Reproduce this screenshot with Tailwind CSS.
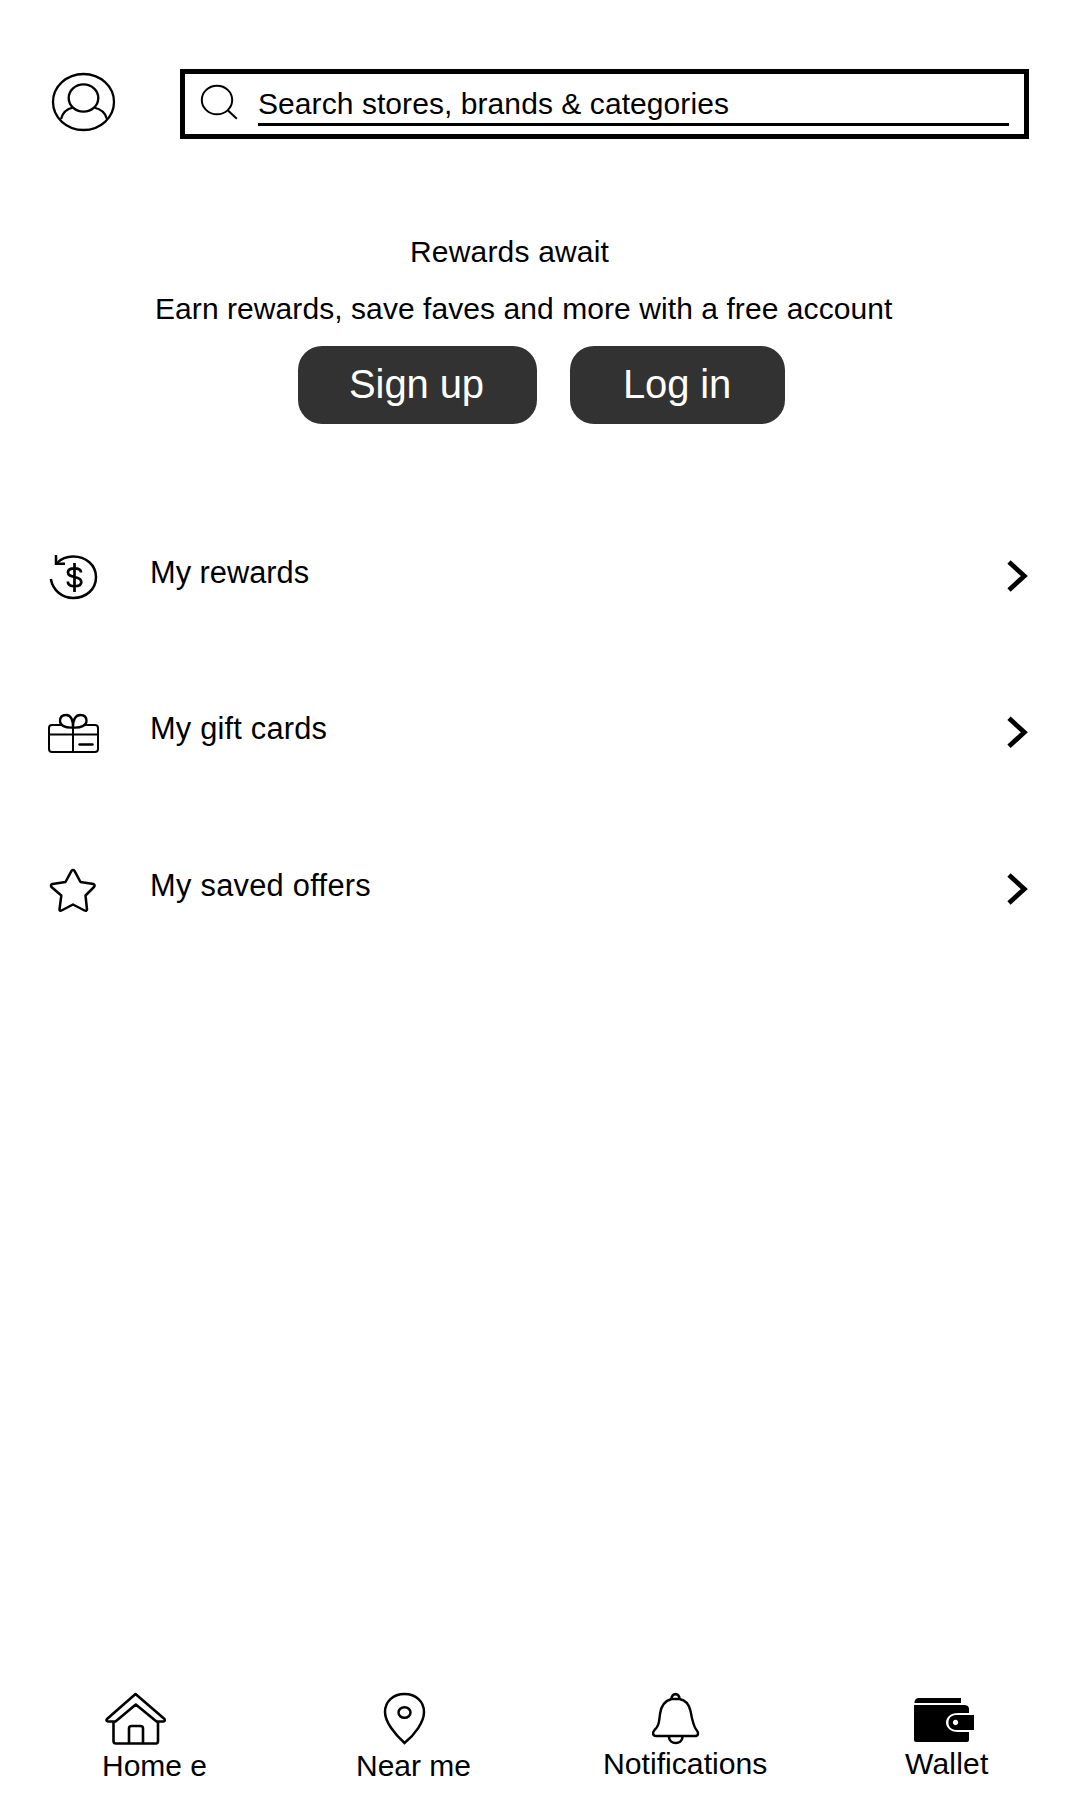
<!DOCTYPE html>
<html lang="en">
<head>
<meta charset="utf-8">
<title>Wallet</title>
<script src="https://cdn.jsdelivr.net/npm/@tailwindcss/browser@4"></script>
</head>
<body class="bg-white">
<div class="flex h-[1800px] w-[1080px] flex-col overflow-hidden bg-white font-['Liberation_Sans',Arial,sans-serif] text-[30px] leading-9 text-black">
  <header class="flex h-[139px] items-start pt-[69px] pl-[50px]">
    <svg class="h-[70px] w-[70px] shrink-0" viewBox="50 69 70 70" fill="none" stroke="black" stroke-width="2.300">
      <ellipse cx="83.5" cy="102" rx="30.5" ry="28"/>
      <ellipse cx="83.5" cy="98" rx="14.800" ry="13.700"/>
      <path d="M61 119C62.5 113 66 109 73 107.500M94 107.500C101 109 105.500 113 107 119"/>
    </svg>
    <div class="ml-[60px] flex h-[70px] w-[849px] items-start border-[5px] border-black">
      <svg class="ml-[13px] h-[60px] w-[44px] shrink-0" viewBox="198 74 44 60" fill="none" stroke="black" stroke-width="2">
        <ellipse cx="217" cy="100" rx="15.200" ry="14.300"/>
        <path d="M227.500 110L236.800 118.800"/>
      </svg>
      <div class="ml-4 h-[52px] w-[751px] border-b-[3px] border-black pt-3 tracking-[0.07px] whitespace-nowrap">Search stores, brands &amp; categories</div>
    </div>
  </header>

  <main class="flex-1">
    <section class="pt-[95px]">
      <h1 class="pl-[410px] tracking-[0.18px]">Rewards await</h1>
      <p class="mt-[21px] pl-[155px] tracking-[0.07px] whitespace-nowrap">Earn rewards, save faves and more with a free account</p>
      <div class="mt-[19px] ml-[298px] flex gap-[33px] text-[40px] leading-[48px] text-white">
        <button class="h-[78px] w-[239px] rounded-[24px] bg-[#323232] pr-2 pb-0.5 pl-1.5 tracking-[-0.1px]">Sign up</button>
        <button class="h-[78px] w-[215px] rounded-[24px] bg-[#323232] pr-[7px] pb-0.5 pl-1.5 tracking-[-0.15px]">Log in</button>
      </div>
    </section>

    <ul class="mt-[121px]">
      <li class="flex h-[156px] items-start pl-[40px]">
        <svg class="h-[70px] w-[70px]" viewBox="40 545 70 70" fill="none" stroke="black" stroke-width="2.500">
          <path d="M50.800 579C53 590.500 62 598 73 598C86.500 598 96 589 96 577S86 556.500 73 556.500C66.500 556.500 61 558.800 57 563"/>
          <path d="M56 555V563.800H65"/>
          <path d="M81 572.500C81 569.500 78.500 568.300 74.500 568.300C70.500 568.300 68 569.800 68 572.400C68 575.500 71 576.200 74.500 577C78.500 577.800 81.300 578.800 81.300 582C81.300 584.800 78.500 586.200 74.500 586.200C70.500 586.200 67.800 584.800 67.800 581.500M74.500 563V592" stroke-width="2.700"/>
        </svg>
        <span class="ml-[40px] pt-2.5 text-[30.8px]">My rewards</span>
        <svg class="ml-auto mr-[40px] h-[70px] w-[40px]" viewBox="1000 545 40 70" fill="none" stroke="black" stroke-width="4.800"><path d="M1009 562L1024.300 576L1009 590"/></svg>
      </li>
      <li class="flex h-[157px] items-start pl-[40px]">
        <svg class="h-[70px] w-[70px]" viewBox="40 701 70 70" fill="none" stroke="black" stroke-width="2">
          <rect x="49" y="725" width="49" height="27" rx="3"/>
          <path d="M49 734.500H98M73 724V752"/>
          <path d="M73 727.500C65 728 60 725.500 60 721C60 717 62.500 715 66 715C70 715 73 719 73 727.500C81 728 86.500 725.500 86.500 721C86.500 717 84 715 80.500 715C76 715 73 719 73 727.500Z" fill="white" stroke-width="2.300"/>
          <path d="M79.500 744.500H92.500" stroke-width="2.400" stroke-linecap="round"/>
        </svg>
        <span class="ml-[40px] pt-2.5 text-[30.8px] tracking-[0.2px]">My gift cards</span>
        <svg class="ml-auto mr-[40px] h-[70px] w-[40px]" viewBox="1000 545 40 70" fill="none" stroke="black" stroke-width="4.800"><path d="M1009 562.300L1024.300 576.300L1009 590.300"/></svg>
      </li>
      <li class="flex h-[156px] items-start pl-[40px]">
        <svg class="h-[70px] w-[70px]" viewBox="40 858 70 70" fill="none" stroke="black" stroke-width="2.500" stroke-linejoin="round">
          <path d="M71.500 870.800Q73 869 74.500 870.800L80.500 882L93.500 884Q95.500 885.200 94 887L85.500 895.500L87 909.500Q86.500 911.500 84.500 910.500L73 904.500L61.500 910.500Q59.500 911.500 59.500 909.500L61.300 895.500L51.500 887Q50 884.800 52.500 884L65.500 882Z"/>
        </svg>
        <span class="ml-[40px] pt-2.5 text-[30.8px] tracking-[0.28px]">My saved offers</span>
        <svg class="ml-auto mr-[40px] h-[70px] w-[40px]" viewBox="1000 545 40 70" fill="none" stroke="black" stroke-width="4.800"><path d="M1009 562L1024.300 576L1009 590"/></svg>
      </li>
    </ul>
  </main>

  <nav class="flex h-[110px] items-start pl-[102px] whitespace-nowrap">
    <a class="flex w-[254px] flex-col">
      <svg class="h-[58px] w-[70px]" viewBox="102 1690 70 58" fill="none" stroke="black" stroke-width="2.600" stroke-linejoin="round">
        <path d="M135.500 1694L164.500 1719Q165.500 1721.500 163 1721.500H156.500L135.800 1704.500L115.500 1721.500H108Q105.500 1721 107 1719Z"/>
        <path d="M113.500 1722V1741Q113.500 1743.500 116 1743.500H156Q158 1743.500 158 1741V1722M129 1743V1728.500Q129 1726 131.500 1726H140.500Q143 1726 143 1728.500V1743"/>
      </svg>
      <span>Home e</span>
    </a>
    <a class="flex w-[247px] flex-col">
      <svg class="ml-[19px] h-[58px] w-[60px]" viewBox="375 1690 60 58" fill="none" stroke="black" stroke-width="2.500">
        <path d="M404.500 1743C395 1734.500 385 1722 385 1712C385 1701.500 393 1694 404.500 1694S424 1701.500 424 1712C424 1722 415 1734.500 404.500 1743Z"/>
        <ellipse cx="404.500" cy="1712.500" rx="6" ry="5.300"/>
      </svg>
      <span>Near me</span>
    </a>
    <a class="flex w-[302px] flex-col">
      <svg class="ml-[42px] h-[56px] w-[60px]" viewBox="645 1690 60 56" fill="none" stroke="black" stroke-width="2.400">
        <path d="M671.500 1699C664 1701 661 1706 660 1714C659 1724 658 1727 654.500 1730C652 1733 653 1736 656 1736H695C698.500 1736 699 1733 696.500 1730C693.500 1727 692 1719 690.500 1711C689 1704 685 1700 679.500 1699Z"/>
        <path d="M671.500 1699C671.500 1692.500 679.500 1692.500 679.500 1699M669 1737C669.500 1745 682 1745 682.500 1737" stroke-width="2.600"/>
      </svg>
      <span class="text-[30.2px]">Notifications</span>
    </a>
    <a class="flex flex-col">
      <svg class="h-[56px] w-[75px]" viewBox="905 1690 75 56">
        <path d="M914.500 1703V1702Q915 1698 919 1698H961V1703ZM914 1705H965Q969 1705.500 969 1709V1713H958C942 1713 942 1732 958 1732H969V1740Q969 1742 967 1742H916Q914 1742 914 1740Z"/>
        <path fill-rule="evenodd" d="M956 1715H974V1730H956C946 1730 946 1715 956 1715ZM955.500 1719.800A2.700 2.700 0 1 0 955.600 1719.800Z"/>
      </svg>
      <span class="tracking-[0.2px]">Wallet</span>
    </a>
  </nav>
</div>
</body>
</html>
